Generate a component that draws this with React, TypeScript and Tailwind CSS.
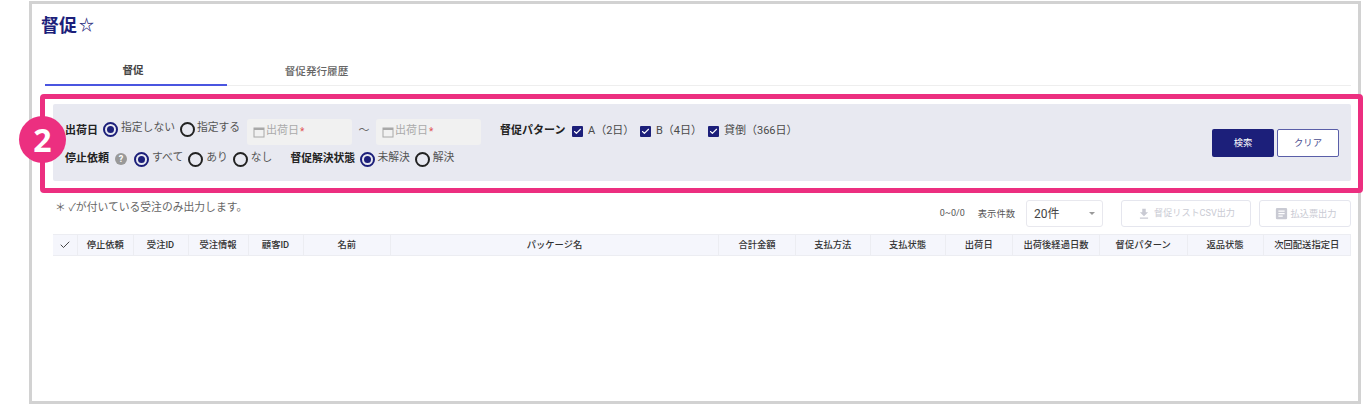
import { Check } from 'lucide-react'

const NAVY = 'border-[#1c1f7a]'

const columns = [
    { label: '', w: 'w-[25px]' },
    { label: '停止依頼', w: 'w-[55.5px]' },
    { label: '受注ID', w: 'w-[55px]' },
    { label: '受注情報', w: 'w-[60px]' },
    { label: '顧客ID', w: 'w-[55px]' },
    { label: '名前', w: 'w-[87.5px]' },
    { label: 'パッケージ名', w: 'w-[328px]' },
    { label: '合計金額', w: 'w-[77px]' },
    { label: '支払方法', w: 'w-[74.5px]' },
    { label: '支払状態', w: 'w-[75px]' },
    { label: '出荷日', w: 'w-[67.5px]' },
    { label: '出荷後経過日数', w: 'w-[87px]' },
    { label: '督促パターン', w: 'w-[87.5px]' },
    { label: '返品状態', w: 'w-[76px]' },
    { label: '次回配送指定日', w: 'w-[87.5px]' },
]

function Radio({ label, checked, gap }: { label: string; checked?: boolean; gap: string }) {
    return (
        <label className={`flex items-center ${gap}`}>
            <span className={`flex h-[15px] w-[15px] items-center justify-center rounded-full border-2 ${checked ? NAVY : 'border-[#222222]'}`}>
                {checked && <span className="h-[7px] w-[7px] rounded-full bg-[#1c1f7a]" />}
            </span>
            <span className="relative -top-px text-[10.8px] whitespace-nowrap text-[#555555]">{label}</span>
        </label>
    )
}

function CheckItem({ label, width }: { label: string; width: string }) {
    return (
        <label className={`flex items-center gap-[5px] ${width}`}>
            <span className="flex h-[11px] w-[11px] items-center justify-center rounded-[1px] bg-[#1c1f7a]">
                <Check size={9} strokeWidth={3} className="text-white" />
            </span>
            <span className="text-[11px] whitespace-nowrap text-[#4a4a4a]">{label}</span>
        </label>
    )
}

function DateInput() {
    return (
        <div className="flex h-[26px] w-[105px] items-center rounded-[3px] bg-[#f1f1f1] pl-[6px]">
            <svg width="12" height="12" viewBox="0 0 12 12" fill="none" className="mr-[1px]">
                <rect x="1" y="2" width="10" height="9" stroke="#a8a8a8" strokeWidth="1" />
                <rect x="1" y="2" width="10" height="2" fill="#a8a8a8" />
            </svg>
            <span className="text-[11px] text-[#aaaaaa]">出荷日</span>
            <span className="ml-[1px] text-[10px] text-[#e05555]">*</span>
        </div>
    )
}

export default function App() {
    return (
        <div className="relative h-[405px] w-[1363px] overflow-hidden bg-white font-['Roboto','Noto_Sans_CJK_JP',sans-serif]">
            <div className="mt-px ml-[29px] h-[403px] w-[1332px] border-[3px] border-[#d2d2d2] pr-[7px] pl-[13px]">
                {/* Title */}
                <div className="-ml-[4px] flex h-[42px] items-center pt-[1px]">
                    <h1 className="text-[18px] leading-none font-bold text-[#1c1f7a]">督促</h1>
                    <span className="ml-[2px] text-[15px] leading-none font-bold text-[#1c1f7a]">☆</span>
                </div>

                {/* Tabs */}
                <div className="mt-[11px] flex h-[29px] border-b border-[#eeeeee]">
                    <div className="flex h-[29px] w-[182px] items-center justify-center border-b-2 border-[#4a55e0] pt-[1px] pr-[6px] text-[10.6px] font-bold text-[#444444]">
                        督促
                    </div>
                    <div className="flex h-[29px] w-[179px] items-center justify-center pt-[1px] text-[10.6px] font-medium text-[#666666]">
                        督促発行履歴
                    </div>
                </div>

                {/* Search panel */}
                <div className="mt-[18px] ml-[8px] flex h-[77px] items-center justify-between rounded-[2px] bg-[#e8e9f1] pr-[12px] pl-[12px]">
                    <div className="flex flex-col gap-[7px]">
                        <div className="flex h-[26px] items-center">
                            <span className="w-[38px] text-[11px] font-bold text-[#222222]">出荷日</span>
                            <div className="relative -top-[2px] flex w-[144px] gap-[5px]">
                                <Radio label="指定しない" checked gap="gap-[3px]" />
                                <Radio label="指定する" gap="gap-[2px]" />
                            </div>
                            <DateInput />
                            <span className="w-[24px] text-center text-[11px] text-[#666666]">～</span>
                            <DateInput />
                            <span className="ml-[19px] w-[72px] text-[11px] font-bold whitespace-nowrap text-[#222222]">督促パターン</span>
                            <CheckItem label="A（2日）" width="w-[68px]" />
                            <CheckItem label="B（4日）" width="w-[68px]" />
                            <CheckItem label="貸倒（366日）" width="w-[90px]" />
                        </div>
                        <div className="flex h-[15px] items-center">
                            <span className="w-[50px] text-[11px] font-bold text-[#222222]">停止依頼</span>
                            <span className="flex h-[12px] w-[12px] items-center justify-center rounded-full bg-[#999999] text-[9px] leading-none font-bold text-white">
                                ?
                            </span>
                            <div className="ml-[7px] flex gap-[5px]">
                                <Radio label="すべて" checked gap="gap-[3px]" />
                                <Radio label="あり" gap="gap-[3px]" />
                                <Radio label="なし" gap="gap-[3px]" />
                            </div>
                            <span className="ml-[18px] w-[70px] text-[10.8px] font-bold whitespace-nowrap text-[#222222]">督促解決状態</span>
                            <div className="flex gap-[5px]">
                                <Radio label="未解決" checked gap="gap-[2px]" />
                                <Radio label="解決" gap="gap-[3px]" />
                            </div>
                        </div>
                    </div>
                    <div className="flex gap-[3px]">
                        <button className="h-[28px] w-[62px] rounded-[2px] bg-[#1c1f7a] text-[9.3px] text-white">検索</button>
                        <button className="h-[28px] w-[62px] rounded-[2px] border border-[#5a5ea8] bg-white text-[9.3px] text-[#4a4d90]">クリア</button>
                    </div>
                </div>

                {/* Note and list controls */}
                <div className="mt-[19px] flex h-[27px] items-start">
                    <p className="ml-[10px] text-[10.8px] leading-[16px] text-[#666666]">＊ ✓が付いている受注のみ出力します。</p>
                    <div className="ml-auto flex items-center">
                        <span className="text-[9px] text-[#555555]">0~0/0</span>
                        <span className="ml-[13px] text-[9.3px] text-[#555555]">表示件数</span>
                        <div className="ml-[11px] flex h-[27px] w-[77px] items-center justify-between rounded-[3px] border border-[#e8e8ee] pr-[7px] pl-[7px] text-[12px] text-[#444444]">
                            20件
                            <span className="h-0 w-0 border-x-[3px] border-t-[3px] border-x-transparent border-t-[#999999]" />
                        </div>
                        <button className="ml-[18px] flex h-[27px] w-[130px] items-center justify-center gap-[3px] rounded-[3px] border border-[#e5e6ee] text-[9.1px] text-[#c9cad3]">
                            <svg width="14" height="14" viewBox="0 0 24 24" fill="#c9cad3">
                                <path d="M19 9h-4V3H9v6H5l7 7 7-7zM5 18v2h14v-2H5z" />
                            </svg>
                            督促リストCSV出力
                        </button>
                        <button className="ml-[8px] flex h-[27px] w-[92px] items-center justify-center gap-[2px] rounded-[3px] border border-[#e5e6ee] text-[9.2px] text-[#c9cad3]">
                            <svg width="15" height="15" viewBox="0 0 24 24" fill="#c9cad3">
                                <path d="M19 3H5a2 2 0 0 0-2 2v14a2 2 0 0 0 2 2h14a2 2 0 0 0 2-2V5a2 2 0 0 0-2-2zm-5 14H7v-2h7v2zm3-4H7v-2h10v2zm0-4H7V7h10v2z" />
                            </svg>
                            払込票出力
                        </button>
                    </div>
                </div>

                {/* Table header */}
                <div className="mt-[7px] ml-[8px] flex h-[22px] w-[1298px] border-y border-[#ecedf2] bg-[#f5f6fc]">
                    {columns.map((col, i) => (
                        <div
                            key={i}
                            className={`flex shrink-0 items-center justify-center border-r border-[#ecedf2] text-[9.3px] font-medium whitespace-nowrap text-[#333333] ${col.w}`}
                        >
                            {i === 0 ? <Check size={12} strokeWidth={1.8} className="text-[#333333]" /> : col.label}
                        </div>
                    ))}
                </div>
            </div>

            {/* Callout drawn over the panel */}
            <div className="absolute top-[94px] left-[40px] h-[99px] w-[1323px] rounded-[4px] border-[5px] border-[#ec2f80]" />
            <div className="absolute top-[116px] left-[19px] flex h-[47px] w-[47px] items-center justify-center rounded-full bg-[#ec2f80] font-['Open_Sans',sans-serif] text-[32px] leading-none font-bold text-white">
                2
            </div>
        </div>
    )
}
